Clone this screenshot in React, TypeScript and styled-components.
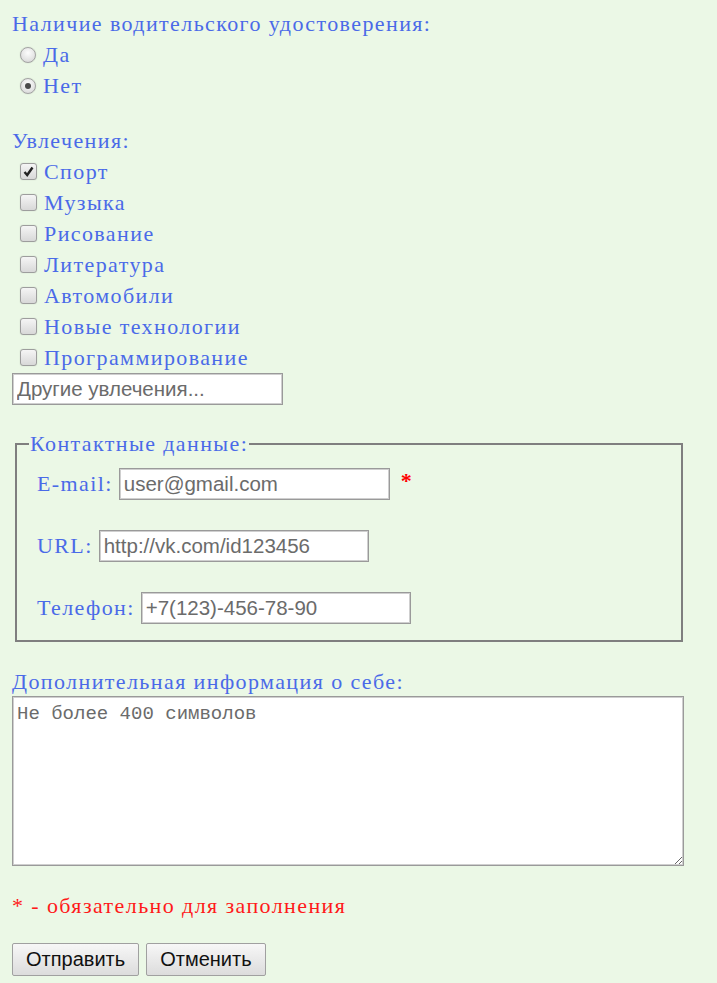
import React from "react";
import styled, { createGlobalStyle } from "styled-components";

const GlobalStyle = createGlobalStyle`
  html, body {
    margin: 0;
    padding: 0;
    background: #ebf8e6;
  }
  body {
    font-family: "Liberation Serif", "Times New Roman", serif;
  }
`;

const Form = styled.form`
  width: 672px;
  padding: 9px 12px 8px;
  color: #4a6ae8;
  font-size: 22px;
  letter-spacing: 1.4px;
`;

const Section = styled.div<{ $gap?: number }>`
  margin-bottom: ${(p) => p.$gap ?? 0}px;
`;

const Heading = styled.div`
  height: 30px;
  line-height: 30px;
`;

const OptionRow = styled.label`
  display: flex;
  align-items: center;
  gap: 7px;
  height: 31px;
  padding-left: 8px;
`;

const RadioMark = styled.span<{ $on?: boolean }>`
  position: relative;
  width: 14px;
  height: 14px;
  border-radius: 50%;
  border: 1px solid #a3a3a3;
  background: radial-gradient(circle at 50% 35%, #fdfdfd 0%, #e6e6e6 55%, #d2d2d2 100%);
  box-shadow: 0 0 1px rgba(0, 0, 0, 0.25);
  flex: none;
  &::after {
    content: "";
    display: ${(p) => (p.$on ? "block" : "none")};
    position: absolute;
    left: 4px;
    top: 4px;
    width: 6px;
    height: 6px;
    border-radius: 50%;
    background: #4a4a4a;
  }
`;

const CheckMark = styled.span`
  display: flex;
  align-items: center;
  justify-content: center;
  width: 15px;
  height: 15px;
  border-radius: 3px;
  border: 1px solid #9d9d9d;
  background: linear-gradient(#f5f5f5, #d8d8d8);
  box-shadow: 0 0 1px rgba(0, 0, 0, 0.25);
  flex: none;
`;

const Field = styled.input<{ $w: number }>`
  box-sizing: border-box;
  width: ${(p) => p.$w}px;
  height: 32px;
  padding: 0 4px;
  border: 1px solid #9a9a9a;
  box-shadow: inset 0 0 0 1px #cfcfcf;
  background: #fff;
  font: 20.5px "Liberation Sans", Arial, sans-serif;
  letter-spacing: normal;
  color: #6b6b6b;
  outline: none;
  &::placeholder {
    color: #6b6b6b;
    opacity: 1;
  }
`;

const ContactSet = styled.fieldset`
  margin: 26px 1px 0 3px;
  padding: 11px 20px 16px;
  border: 2px solid #7f7f7f;
  min-width: 0;
`;

const Legend = styled.legend`
  margin-left: -8px;
  padding: 0 1px;
  line-height: 26px;
`;

const ContactRows = styled.div`
  display: flex;
  flex-direction: column;
  gap: 30px;
`;

const ContactRow = styled.label`
  display: flex;
  align-items: center;
  gap: 6px;
  height: 32px;
`;

const Required = styled.span`
  color: #ff0000;
  margin-left: 5px;
  font-weight: bold;
  position: relative;
  top: -3px;
`;

const InfoLabel = styled.div`
  margin-top: 26px;
  height: 28px;
  line-height: 28px;
`;

const InfoArea = styled.textarea`
  display: block;
  box-sizing: border-box;
  width: 672px;
  height: 170px;
  padding: 6px 4px;
  border: 1px solid #9a9a9a;
  box-shadow: inset 0 0 0 1px #cfcfcf;
  background: #fff;
  font: 19px "Liberation Mono", "DejaVu Sans Mono", monospace;
  letter-spacing: normal;
  color: #6b6b6b;
  outline: none;
  &::placeholder {
    color: #6b6b6b;
    opacity: 1;
  }
`;

const Note = styled.div`
  margin-top: 26px;
  height: 28px;
  line-height: 28px;
  color: #ff1a1a;
`;

const Buttons = styled.div`
  display: flex;
  gap: 7px;
  margin-top: 23px;
`;

const Button = styled.button`
  height: 33px;
  padding: 0 13px;
  border: 1px solid #a0a0a0;
  border-radius: 2px;
  background: linear-gradient(#f7f7f7, #dcdcdc);
  font: 20px "Liberation Sans", Arial, sans-serif;
  letter-spacing: normal;
  color: #111;
`;

const hobbies = [
  { name: "Спорт", on: true },
  { name: "Музыка" },
  { name: "Рисование" },
  { name: "Литература" },
  { name: "Автомобили" },
  { name: "Новые технологии" },
  { name: "Программирование" },
];

export default function App() {
  return (
    <>
      <GlobalStyle />
      <Form onSubmit={(e) => e.preventDefault()}>
        <Section $gap={25}>
          <Heading>Наличие водительского удостоверения:</Heading>
          <OptionRow>
            <RadioMark />
            Да
          </OptionRow>
          <OptionRow>
            <RadioMark $on />
            Нет
          </OptionRow>
        </Section>

        <Section>
          <Heading>Увлечения:</Heading>
          {hobbies.map((h) => (
            <OptionRow key={h.name}>
              <CheckMark>
                {h.on && (
                  <svg width="13" height="13" viewBox="0 0 13 13">
                    <path d="M2.5 7 L5.2 10 L10.5 2.5" fill="none" stroke="#222" strokeWidth="2.4" />
                  </svg>
                )}
              </CheckMark>
              {h.name}
            </OptionRow>
          ))}
          <Field $w={271} placeholder="Другие увлечения..." />
        </Section>

        <ContactSet>
          <Legend>Контактные данные:</Legend>
          <ContactRows>
            <ContactRow>
              E-mail:
              <Field $w={271} placeholder="user@gmail.com" />
              <Required>*</Required>
            </ContactRow>
            <ContactRow>
              URL:
              <Field $w={270} placeholder="http://vk.com/id123456" />
            </ContactRow>
            <ContactRow>
              Телефон:
              <Field $w={270} placeholder="+7(123)-456-78-90" />
            </ContactRow>
          </ContactRows>
        </ContactSet>

        <InfoLabel>Дополнительная информация о себе:</InfoLabel>
        <InfoArea placeholder="Не более 400 символов" />

        <Note>* - обязательно для заполнения</Note>

        <Buttons>
          <Button type="submit">Отправить</Button>
          <Button type="reset">Отменить</Button>
        </Buttons>
      </Form>
    </>
  );
}
